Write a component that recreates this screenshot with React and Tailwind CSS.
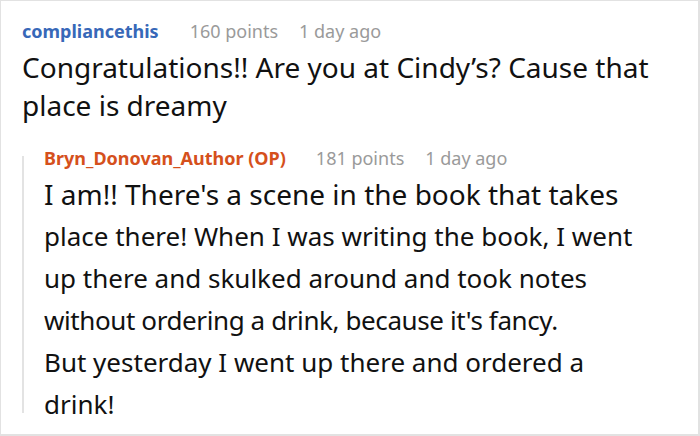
export default function App() {
  const font = { fontFamily: '"Noto Sans", "Open Sans", sans-serif' };
  return (
    <div style={font} className="w-[700px] h-[436px] bg-white border border-[#e2e2e2] border-r-2 border-b-2 overflow-hidden text-[#111]">
      <div className="pl-[21px] pt-[18px]">
        <div className="flex items-baseline text-[18px] leading-[24px]">
          <span className="font-bold text-[#3768b8]">compliancethis</span>
          <span className="ml-[31px] text-[#9a9a9a]">160 points</span>
          <span className="ml-[21px] text-[#9a9a9a]">1 day ago</span>
        </div>
        <div className="mt-[5px] text-[28px] leading-[38px]">
          Congratulations!! Are you at Cindy’s? Cause that
          <br />
          place is dreamy
        </div>
      </div>
      <div className="flex pl-[21px] mt-[22px]">
        <div className="w-[2px] bg-[#e3e3e3] mt-[10px] mb-[12px] self-stretch" />
        <div className="pl-[20px]">
          <div className="flex items-baseline text-[18px] leading-[24px]">
            <span className="font-bold text-[#d5501c]">Bryn_Donovan_Author (OP)</span>
            <span className="ml-[30px] text-[#9a9a9a]">181 points</span>
            <span className="ml-[21px] text-[#9a9a9a]">1 day ago</span>
          </div>
          <div className="mt-[3px] leading-[42px]">
            <div className="text-[28px]">I am!! There's a scene in the book that takes</div>
            <div className="text-[26px]">place there! When I was writing the book, I went</div>
            <div className="text-[26px]">up there and skulked around and took notes</div>
            <div className="text-[26px] tracking-[-0.4px]">without ordering a drink, because it's fancy.</div>
            <div className="text-[26px]">But yesterday I went up there and ordered a</div>
            <div className="text-[26px]">drink!</div>
          </div>
        </div>
      </div>
    </div>
  );
}
